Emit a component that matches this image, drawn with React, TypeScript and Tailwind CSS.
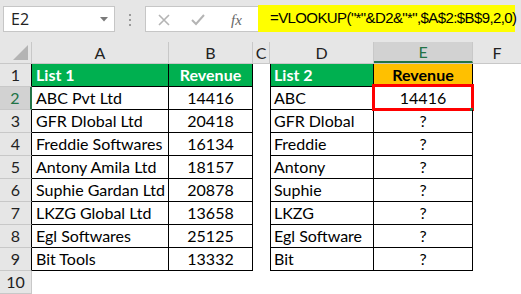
import React from "react";

const rows1: [string, string][] = [
  ["ABC Pvt Ltd", "14416"],
  ["GFR Dlobal Ltd", "20418"],
  ["Freddie Softwares", "16134"],
  ["Antony Amila Ltd", "18157"],
  ["Suphie Gardan Ltd", "20878"],
  ["LKZG Global Ltd", "13658"],
  ["Egl Softwares", "25125"],
  ["Bit Tools", "13332"],
];
const rows2 = ["ABC", "GFR Dlobal", "Freddie", "Antony", "Suphie", "LKZG", "Egl Software", "Bit"];

const cellFont = { fontFamily: "Lato, 'Liberation Sans', sans-serif" };

export default function App() {
  return (
    <div className="w-[521px] h-[294px] bg-white overflow-hidden relative" style={cellFont}>
      {/* Formula bar */}
      <div className="h-[42px] bg-[#e6e6e6] relative">
        <div className="absolute left-[3px] top-[6px] w-[112px] h-[26px] bg-white border border-[#c6c6c6] flex items-center justify-between pl-[7px] pr-[6px]">
          <span className="text-[16px] text-[#222]" style={{ fontFamily: "'Open Sans', sans-serif" }}>E2</span>
          <svg width="8" height="5" viewBox="0 0 8 5"><path d="M0 0 L8 0 L4 4.5 Z" fill="#7a7a7a" /></svg>
        </div>
        <div className="absolute left-[129px] top-[14px] flex flex-col gap-[3px]">
          <div className="w-[2px] h-[2px] bg-[#9a9a9a]" />
          <div className="w-[2px] h-[2px] bg-[#9a9a9a]" />
          <div className="w-[2px] h-[2px] bg-[#9a9a9a]" />
        </div>
        <div className="absolute left-[145px] top-[6px] w-[120px] h-[26px] bg-white border border-[#c6c6c6]">
          <svg className="absolute left-[12px] top-[7px]" width="12" height="12" viewBox="0 0 12 12">
            <path d="M1 1 L11 11 M11 1 L1 11" stroke="#b4b4b4" strokeWidth="1.6" />
          </svg>
          <svg className="absolute left-[45px] top-[7px]" width="14" height="12" viewBox="0 0 14 12">
            <path d="M1 6 L5 10 L13 1" stroke="#b4b4b4" strokeWidth="2" fill="none" />
          </svg>
          <span className="absolute left-[85px] top-[2px] text-[15px] italic text-[#666]" style={{ fontFamily: "'Liberation Serif', serif" }}>fx</span>
        </div>
        <div className="absolute left-[258px] top-[5px] w-[257px] h-[27px] bg-[#ffff00] flex items-center pl-[12px] text-[15px] text-black whitespace-nowrap" style={{ fontFamily: "'Liberation Sans', sans-serif", letterSpacing: "-0.6px" }}>
          =VLOOKUP("*"&amp;D2&amp;"*",$A$2:$B$9,2,0)
        </div>
      </div>

      {/* Column headers */}
      <div className="flex h-[22px] bg-[#e6e6e6] border-b border-[#c8c8c8] text-[16px] text-[#222]">
        <div className="w-[32px] border-r border-[#c8c8c8] relative">
          <svg className="absolute right-[3px] bottom-[3px]" width="15" height="15" viewBox="0 0 15 15">
            <path d="M15 0 L15 15 L0 15 Z" fill="#b4b4b4" />
          </svg>
        </div>
        <div className="w-[137px] border-r border-[#c8c8c8] flex items-center justify-center">A</div>
        <div className="w-[84px] border-r border-[#c8c8c8] flex items-center justify-center">B</div>
        <div className="w-[17px] border-r border-[#c8c8c8] flex items-center justify-center">C</div>
        <div className="w-[104px] border-r border-[#c8c8c8] flex items-center justify-center">D</div>
        <div className="w-[99px] bg-[#d2d2d2] border-r border-[#c8c8c8] border-b-2 border-b-[#217346] flex items-center justify-center text-[#217346]">E</div>
        <div className="flex-1 flex items-center justify-center">F</div>
      </div>

      {/* Row 1 */}
      <div className="flex h-[23px] text-[16px]">
        <RowHead n={1} />
        <div className="w-[137px] bg-[#00b050] border-r border-b border-black pl-[4px] flex items-center font-bold text-white">List 1</div>
        <div className="w-[84px] bg-[#00b050] border-r border-b border-black flex items-center justify-center font-bold text-white">Revenue</div>
        <div className="w-[17px]" />
        <div className="w-[104px] bg-[#00b050] border-l border-r border-b border-black pl-[3px] flex items-center font-bold text-white">List 2</div>
        <div className="w-[99px] bg-[#ffc000] border-r border-b border-black flex items-center justify-center font-bold text-black">Revenue</div>
        <div className="flex-1" />
      </div>

      {rows1.map(([name, rev], i) => (
        <div key={i} className="flex h-[23px] text-[16px] text-black">
          <RowHead n={i + 2} selected={i === 0} />
          <div className="w-[137px] border-r border-b border-black pl-[4px] flex items-center whitespace-nowrap">{name}</div>
          <div className="w-[84px] border-r border-b border-black flex items-center justify-center">{rev}</div>
          <div className="w-[17px]" />
          <div className="w-[104px] border-l border-r border-b border-black pl-[3px] flex items-center whitespace-nowrap">{rows2[i]}</div>
          <div className="w-[99px] border-r border-b border-black flex items-center justify-center relative">
            {i === 0 ? "14416" : "?"}
            {i === 0 && (
              <div className="absolute left-[-2px] top-[-3px] w-[102px] h-[27px] border-[3px] border-[#ff0000]" />
            )}
            {i === 0 && <div className="absolute right-[-1px] bottom-[-2px] w-[3px] h-[3px] bg-[#217346]" />}
          </div>
          <div className="flex-1" />
        </div>
      ))}

      <div className="flex h-[23px] text-[16px]">
        <RowHead n={10} outside />
        <div className="flex-1" />
      </div>
    </div>
  );
}

function RowHead({ n, selected, outside }: { n: number; selected?: boolean; outside?: boolean }) {
  return (
    <div
      className={
        "w-[32px] flex items-center justify-center border-b border-[#c8c8c8] " +
        (selected
          ? "bg-[#d2d2d2] text-[#217346] border-r-2 border-r-[#217346]"
          : outside
          ? "bg-[#e6e6e6] text-[#222] border-r border-r-[#c8c8c8]"
          : "bg-[#e6e6e6] text-[#222] border-r border-r-black")
      }
    >
      {n}
    </div>
  );
}
